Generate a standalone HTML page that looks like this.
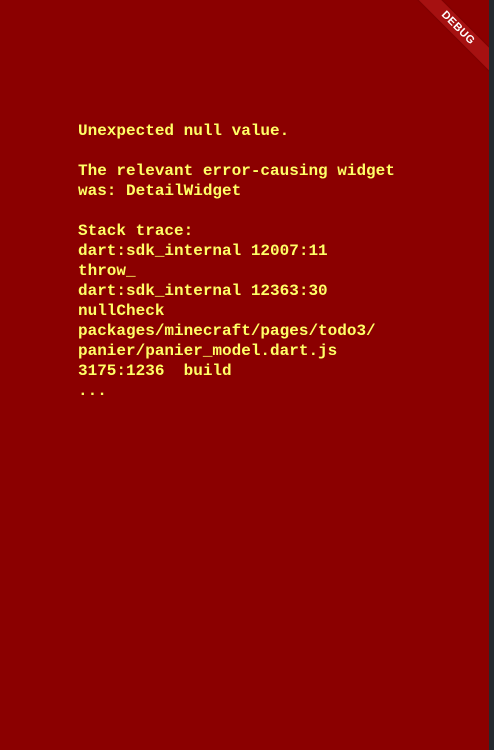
<!DOCTYPE html>
<html><head><meta charset="utf-8"><style>
html,body{margin:0;padding:0;width:494px;height:750px;overflow:hidden;background:#24292e;}
#app{position:absolute;left:0;top:0;width:489px;height:750px;background:#8B0000;overflow:hidden;}
pre{position:absolute;left:78px;top:121px;margin:0;font-family:"Liberation Mono",monospace;font-weight:bold;font-size:16px;line-height:20px;color:#FFFF66;}
.banner{position:absolute;width:120px;height:16px;background:rgba(170,20,20,0.85);top:20px;right:-29px;transform:rotate(45deg);color:#fff;font-family:"Liberation Sans",sans-serif;font-weight:bold;font-size:11px;line-height:16px;text-align:center;letter-spacing:0.5px;box-shadow:0 0 2px rgba(0,0,0,0.3);}
</style></head><body>
<div id="app">
<pre>Unexpected null value.

The relevant error-causing widget
was: DetailWidget

Stack trace:
dart:sdk_internal 12007:11
throw_
dart:sdk_internal 12363:30
nullCheck
packages/minecraft/pages/todo3/
panier/panier_model.dart.js
3175:1236  build
...</pre>
<div class="banner">DEBUG</div>
</div>
</body></html>
